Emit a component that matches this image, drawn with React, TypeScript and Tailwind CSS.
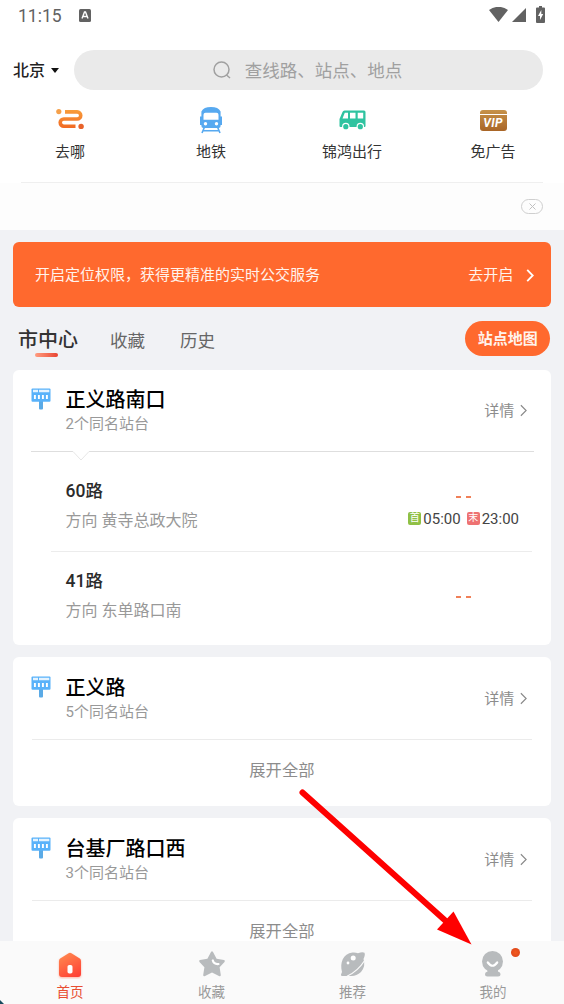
import React from "react";

const quickLinks = [
  { label: "去哪", icon: <RouteIcon /> },
  { label: "地铁", icon: <MetroIcon /> },
  { label: "锦鸿出行", icon: <VanIcon /> },
  { label: "免广告", icon: <VipIcon /> },
];

const routes = [
  { name: "60路", direction: "黄寺总政大院", first: "05:00", last: "23:00" },
  { name: "41路", direction: "东单路口南" },
];

function RouteIcon() {
  return (
    <svg className="w-7 h-[22px]" viewBox="0 0 28 22" fill="none">
      <defs>
        <linearGradient id="route" x1="0" y1="0" x2="0" y2="22" gradientUnits="userSpaceOnUse">
          <stop stopColor="#f9a03c" />
          <stop offset="1" stopColor="#f0601f" />
        </linearGradient>
      </defs>
      <circle cx="2.8" cy="2.6" r="2.6" fill="#f5a04a" />
      <path
        d="M9 2.900H21.200a3.400 3.400 0 0 1 0 7.100H7.800a3.600 3.600 0 0 0 0 7.200H19.500"
        stroke="url(#route)"
        strokeWidth="3.600"
      />
      <circle cx="25.100" cy="17.400" r="2.700" fill="#e8622a" />
    </svg>
  );
}

function MetroIcon() {
  return (
    <svg className="w-6 h-[27px]" viewBox="0 0 24 27">
      <path d="M12 0c5 0 8 1.500 9.600 4.400V9.500h1.400v8.500h-1.400V19q0 2-2 2H4.400q-2 0-2-2v-1H1V9.500h1.400V4.400C4 1.500 7 0 12 0z" fill="#57a9f0" />
      <path d="M6.500 5.800h11q2 0 2 2V12.800h-15V7.800q0-2 2-2z" fill="#fff" />
      <circle cx="6.500" cy="16.800" r="1.700" fill="#fff" />
      <circle cx="17.500" cy="16.800" r="1.700" fill="#fff" />
      <path d="M5.300 20.500L3 26M18.700 20.500L21 26M4.500 23.800h15" stroke="#57a9f0" strokeWidth="1.600" />
    </svg>
  );
}

function VanIcon() {
  return (
    <svg className="w-[27px] h-5" viewBox="0 0 27 20">
      <path d="M5.500.500H25Q26.500.500 26.500 2V16Q26.500 17 25.500 17H1.500Q.500 17 .500 16V9L3.500 2Q4 .500 5.500.500z" fill="#2fc3a0" />
      <path d="M5.800 2.800H9V8.500H3.500zM11 2.800h5.500V8.500H11zM18.700 2.800h5.500V8.500h-5.500z" fill="#fff" />
      <circle cx="6.800" cy="16.400" r="3.700" fill="#fff" />
      <circle cx="21.300" cy="16.400" r="3.700" fill="#fff" />
      <circle cx="6.800" cy="16.700" r="2.600" fill="#2fc3a0" />
      <circle cx="21.300" cy="16.700" r="2.600" fill="#2fc3a0" />
    </svg>
  );
}

function VipIcon() {
  return (
    <span className="w-[27px] h-[21px] rounded-[3px] overflow-hidden flex flex-col bg-gradient-to-b from-[#c6924a] to-[#a96526]">
      <span className="h-1 shrink-0" />
      <span className="h-[1.5px] shrink-0 bg-white" />
      <span className="flex-1 flex items-center justify-center text-[12px] leading-none font-bold italic tracking-[0.3px] text-white">
        VIP
      </span>
    </span>
  );
}

function StopIcon() {
  return (
    <svg className="w-5 h-[22px] shrink-0" viewBox="0 0 20 22">
      <path d="M8 13h4v7.500q0 1-1 1H9q-1 0-1-1z" fill="#5aaae6" />
      <rect x="0.500" y="0.500" width="19" height="13.300" rx="1" fill="#59b2fa" />
      <path d="M2 1.800h5v2.400H2zM8 1.800h10.300v2.400H8z" fill="#e4f3ff" />
      <path d="M3.900 7v4M7.900 7v4M11.900 7v4M15.900 7v4" stroke="#fff" strokeWidth="1.900" />
    </svg>
  );
}

function Chevron({ className }: { className: string }) {
  return (
    <svg className={className} viewBox="0 0 8 14" fill="none" stroke="currentColor">
      <path d="M1 1l6 6-6 6" />
    </svg>
  );
}

function StatusBar() {
  return (
    <div className="h-8 px-[18px] flex items-center text-[#626262]">
      <span className="mt-px text-[17.5px] leading-none">11:15</span>
      <svg className="ml-[17px] -mt-[2px] w-3 h-[13px]" viewBox="0 0 12 13">
        <rect width="12" height="13" rx="1.500" fill="#626262" />
        <path d="M3 9.500L5.500 3h1L9 9.500M4 7.500h4" stroke="#fff" strokeWidth="1.400" fill="none" />
      </svg>
      <svg className="ml-auto -mt-[3px] w-[19px] h-[15px]" viewBox="0 0 19 15">
        <path d="M0 3Q9.500-3.400 19 3L9.500 15z" fill="#626262" />
      </svg>
      <svg className="ml-1 w-[14px] h-[14px] -mt-[2px]" viewBox="0 0 14 14">
        <path d="M14 0V14H0z" fill="#626262" />
      </svg>
      <svg className="ml-[10px] mr-px w-[9px] h-[17px] -mt-[3px]" viewBox="0 0 9 17">
        <path d="M3 0h3v1.500h2Q9 1.500 9 2.500V16Q9 17 8 17H1Q0 17 0 16V2.500Q0 1.500 1 1.500h2z" fill="#626262" />
        <path d="M5.300 4L2 10h2v4l3.200-6H5.300z" fill="#fff" />
      </svg>
    </div>
  );
}

function Header() {
  return (
    <header className="h-[230px] shrink-0 bg-white flex flex-col">
      <StatusBar />
      <div className="mt-[18px] h-10 pl-[13px] pr-[21px] flex items-center">
        <span className="mt-[2px] w-8 shrink-0 whitespace-nowrap text-base leading-none font-medium text-[#222]">北京</span>
        <svg className="ml-[6px] w-2 h-[5px]" viewBox="0 0 8 5">
          <path d="M0 0h8L4 5z" fill="#111" />
        </svg>
        <div className="ml-[15px] pr-[2px] flex-1 h-10 rounded-full bg-[#eaeaea] flex items-center justify-center text-[#a0a0a0]">
          <svg className="w-[18px] h-[18px]" viewBox="0 0 18 18" fill="none" stroke="currentColor" strokeWidth="1.500">
            <circle cx="8.500" cy="8.500" r="7.500" />
            <path d="M13.500 14l3.500 3" />
          </svg>
          <span className="mt-[3px] ml-[14px] text-[17.5px] leading-none">查线路、站点、地点</span>
        </div>
      </div>
      <nav className="h-[92px] grid grid-cols-4">
        {quickLinks.map((link) => (
          <div key={link.label} className="flex flex-col items-center">
            <div className="mt-4 h-7 pr-px flex items-center justify-center">{link.icon}</div>
            <span className="mt-[10px] pr-px text-[15px] leading-4 text-[#333]">{link.label}</span>
          </div>
        ))}
      </nav>
      <div className="mx-[21px] h-px bg-[#efefef]" />
      <div className="flex-1 bg-[#fdfdfd] pr-[21px] flex items-center justify-end">
        <span className="w-[22px] h-[15px] rounded-full border border-[#cfcfcf] flex items-center justify-center">
          <svg className="w-[7px] h-[7px]" viewBox="0 0 7 7" stroke="#c0c0c0">
            <path d="M.500.500l6 6M6.500.500l-6 6" />
          </svg>
        </span>
      </div>
    </header>
  );
}

function StationHead({ name, count }: { name: string; count: number }) {
  return (
    <div className="h-[81px] pl-[18px] pr-6 flex">
      <div className="mt-[18px]">
        <StopIcon />
      </div>
      <div className="ml-[15px] flex-1 pt-[19px]">
        <h2 className="text-xl leading-[22px] font-medium text-black">{name}</h2>
        <p className="mt-[3px] text-[15px] leading-5 text-[#999]">{count}个同名站台</p>
      </div>
      <div className="h-[81px] flex items-center text-[#888]">
        <span className="pt-[2px] text-[15px] text-[#8c8c8c]">详情</span>
        <Chevron className="ml-[6px] w-[7px] h-[13px] stroke-[1.3]" />
      </div>
    </div>
  );
}

function CollapsedCard({ name, count }: { name: string; count: number }) {
  return (
    <section className="shrink-0 mt-3 h-[149px] pt-px bg-white rounded-md">
      <StationHead name={name} count={count} />
      <div className="mx-[19px] h-px bg-[#ebebeb]" />
      <p className="h-[63px] flex items-center justify-center text-[16.3px] text-[#8c8c8c]">展开全部</p>
    </section>
  );
}

function StationCard() {
  return (
    <section className="shrink-0 h-[275px] bg-white rounded-md">
      <StationHead name="正义路南口" count={2} />
      <svg className="mx-[18px] block w-[503px] h-[11px]" viewBox="0 0 503 11" fill="none">
        <path d="M0 .500H42M58 .500H503" stroke="#dedede" />
        <path d="M42 .500l8 8.500 8-8.500" stroke="#e6e6e6" />
      </svg>
      <div className="-mt-[11px]">
        {routes.map((route, i) => (
          <div key={route.name} className={i === 0 ? "h-[101px] pt-[30px]" : "h-[94px] pt-[19px]"}>
            <div className="pl-[53px] pr-8 h-[52px] flex justify-between">
              <div>
                <h3 className="text-[17.500px] leading-5 font-medium text-[#2b2b2b]">{route.name}</h3>
                <p className="mt-[10px] text-base leading-5 text-[#999]">方向 {route.direction}</p>
              </div>
              <div className="w-[111px] flex flex-col items-center">
                <div className={route.first ? "mt-[15px] mr-px flex gap-[5px]" : "mt-[25px] mr-px flex gap-[5px]"}>
                  <span className="w-[5px] h-[2px] bg-[#f08058]" />
                  <span className="w-[5px] h-[2px] bg-[#f08058]" />
                </div>
                {route.first && (
                  <div className="mt-[11px] self-stretch flex items-center text-[15px] leading-5 text-[#444]">
                    <span className="-mt-[2px] w-[13px] h-[13px] shrink-0 rounded-[2px] bg-[#8fc045] text-white text-[10px] leading-none flex items-center justify-center">
                      首
                    </span>
                    <span className="ml-[2px]">{route.first}</span>
                    <span className="-mt-[2px] ml-[6px] w-[13px] h-[13px] shrink-0 rounded-[2px] bg-[#ee7272] text-white text-[10px] leading-none flex items-center justify-center">
                      末
                    </span>
                    <span className="ml-[2px]">{route.last}</span>
                  </div>
                )}
              </div>
            </div>
            {i === 0 && <div className="ml-[38px] mr-[19px] mt-[18px] h-px bg-[#ececec]" />}
          </div>
        ))}
      </div>
    </section>
  );
}

function TabBar() {
  return (
    <footer className="relative h-[63px] shrink-0 bg-[#fafafa] grid grid-cols-4 text-[13.500px] leading-4 text-[#999]">
      <div className="pr-px flex flex-col items-center text-[#e84e32]">
        <svg className="mt-[10px] w-7 h-7" viewBox="0 0 28 28">
          <defs>
            <linearGradient id="home" x1="6" y1="2" x2="20" y2="27" gradientUnits="userSpaceOnUse">
              <stop stopColor="#ff8a50" />
              <stop offset="1" stopColor="#ff3f34" />
            </linearGradient>
          </defs>
          <path
            d="M12.600 2.200Q14 1.300 15.400 2.200L23.800 7.600Q25 8.400 25 10V23Q25 26 22 26H6Q3 26 3 23V10Q3 8.400 4.200 7.600z"
            fill="url(#home)"
            className="drop-shadow-[0_1px_1px_#ffb5a5]"
          />
          <rect x="11.500" y="14" width="5" height="8.500" rx="1.800" fill="#fff" />
        </svg>
        <span className="mt-[5px]">首页</span>
      </div>
      <div className="flex flex-col items-center">
        <svg className="mt-[9px] w-7 h-7" viewBox="0 0 28 28">
          <path
            d="M13 2Q14 .700 15 2L18.600 8.800 26 10Q27.600 10.600 26.500 12L21.600 17.300 22.800 25Q22.700 26.700 21 26L14 22.600 7 26Q5.300 26.700 5.200 25L6.400 17.300 1.500 12Q.400 10.600 2 10L9.400 8.800z"
            fill="#b8bbbd"
          />
          <path d="M14.800 10.500Q16 14.500 20.500 14" fill="none" stroke="#fff" strokeWidth="2.200" strokeLinecap="round" />
        </svg>
        <span className="mt-[6px]">收藏</span>
      </div>
      <div className="flex flex-col items-center">
        <svg className="mt-[9px] w-7 h-7" viewBox="0 0 28 28">
          <path
            d="M3 22C.500 13 4 3.500 13.500 2.500q3-.300 5.500.700 4.500-1.700 6.500-.500 1 2-1 6.300 2.500 7-2.500 13-5 4.500-10.500 4H3.500Q1.500 26 2 24.500z"
            fill="#b8bbbd"
          />
          <path d="M8 26.300Q19 21 25.300 11" fill="none" stroke="#fafafa" strokeWidth="1.200" />
          <circle cx="14.200" cy="8" r="2.500" fill="#fff" />
          <circle cx="9" cy="13" r="1.400" fill="#fff" />
        </svg>
        <span className="mt-[6px]">推荐</span>
      </div>
      <div className="pr-px flex flex-col items-center">
        <div className="relative mt-[9px] w-7 h-7">
          <svg className="w-7 h-7" viewBox="0 0 28 28">
            <circle cx="13.500" cy="11.500" r="10.500" fill="#b8bbbd" />
            <path d="M8.500 19h10.500v2.500q2.500.500 2.500 2.500 0 2.500-2.500 2.500H8.500Q6 26.500 6 24q0-2 2.500-2.500z" fill="#b8bbbd" />
            <path d="M8.800 12.500q4.700 6.500 9.400 0" fill="none" stroke="#fff" strokeWidth="2.200" strokeLinecap="round" />
          </svg>
          <span className="absolute left-8 -top-[2px] w-[9px] h-[9px] rounded-full bg-radial from-[#f25a20] to-[#d94218]" />
        </div>
        <span className="mt-[6px]">我的</span>
      </div>
      <svg className="absolute left-0 bottom-0 w-1 h-1" viewBox="0 0 4 4">
        <path d="M0 0l4 4H0z" fill="#174b5e" />
      </svg>
    </footer>
  );
}

function App() {
  return (
    <div className="relative w-[564px] h-[1004px] overflow-hidden flex flex-col bg-[#f1f2f5] font-['Roboto','Noto_Sans_CJK_SC',sans-serif]">
      <Header />
      <main className="flex-1 min-h-0 overflow-hidden pl-[12.500px] pr-[12.700px] flex flex-col">
        <div className="mt-3 h-[65px] shrink-0 rounded-md bg-[#ff692e] pl-[22.500px] pr-[17px] flex items-center text-[15px] text-[#fff3ec]">
          <span className="pt-px">开启定位权限，获得更精准的实时公交服务</span>
          <span className="ml-auto pt-px">去开启</span>
          <Chevron className="ml-[13px] mt-[2px] w-2 h-[13px] stroke-2 text-white" />
        </div>
        <div className="h-[63px] shrink-0 pl-[5.500px] pr-px flex items-start text-[17.500px] leading-5 text-[#666]">
          <div className="mt-[21px] flex flex-col items-center">
            <span className="text-xl leading-6 font-medium text-[#333]">市中心</span>
            <span className="mt-px mr-[3px] w-[23px] h-1 rounded-full bg-gradient-to-r from-[#ff9c80] to-[#e84030]" />
          </div>
          <span className="ml-[32px] mt-6">收藏</span>
          <span className="ml-[35px] mt-6">历史</span>
          <span className="ml-auto mt-[14px] w-[85px] h-[35px] rounded-full bg-[#ff692e] flex items-center justify-center text-[15px] font-bold text-[#fff3ec]">
            站点地图
          </span>
        </div>
        <StationCard />
        <CollapsedCard name="正义路" count={5} />
        <CollapsedCard name="台基厂路口西" count={3} />
      </main>
      <TabBar />
      {/* pointer to the profile tab */}
      <svg className="absolute left-0 top-0 w-[564px] h-[1004px] pointer-events-none" viewBox="0 0 564 1004">
        <path d="M302.500 792.500L448 923" stroke="#fe0000" strokeWidth="6" strokeLinecap="round" />
        <path d="M471.500 944.500L453.500 911.500 437 929.500z" fill="#fe0000" />
      </svg>
    </div>
  );
}

export default App;
